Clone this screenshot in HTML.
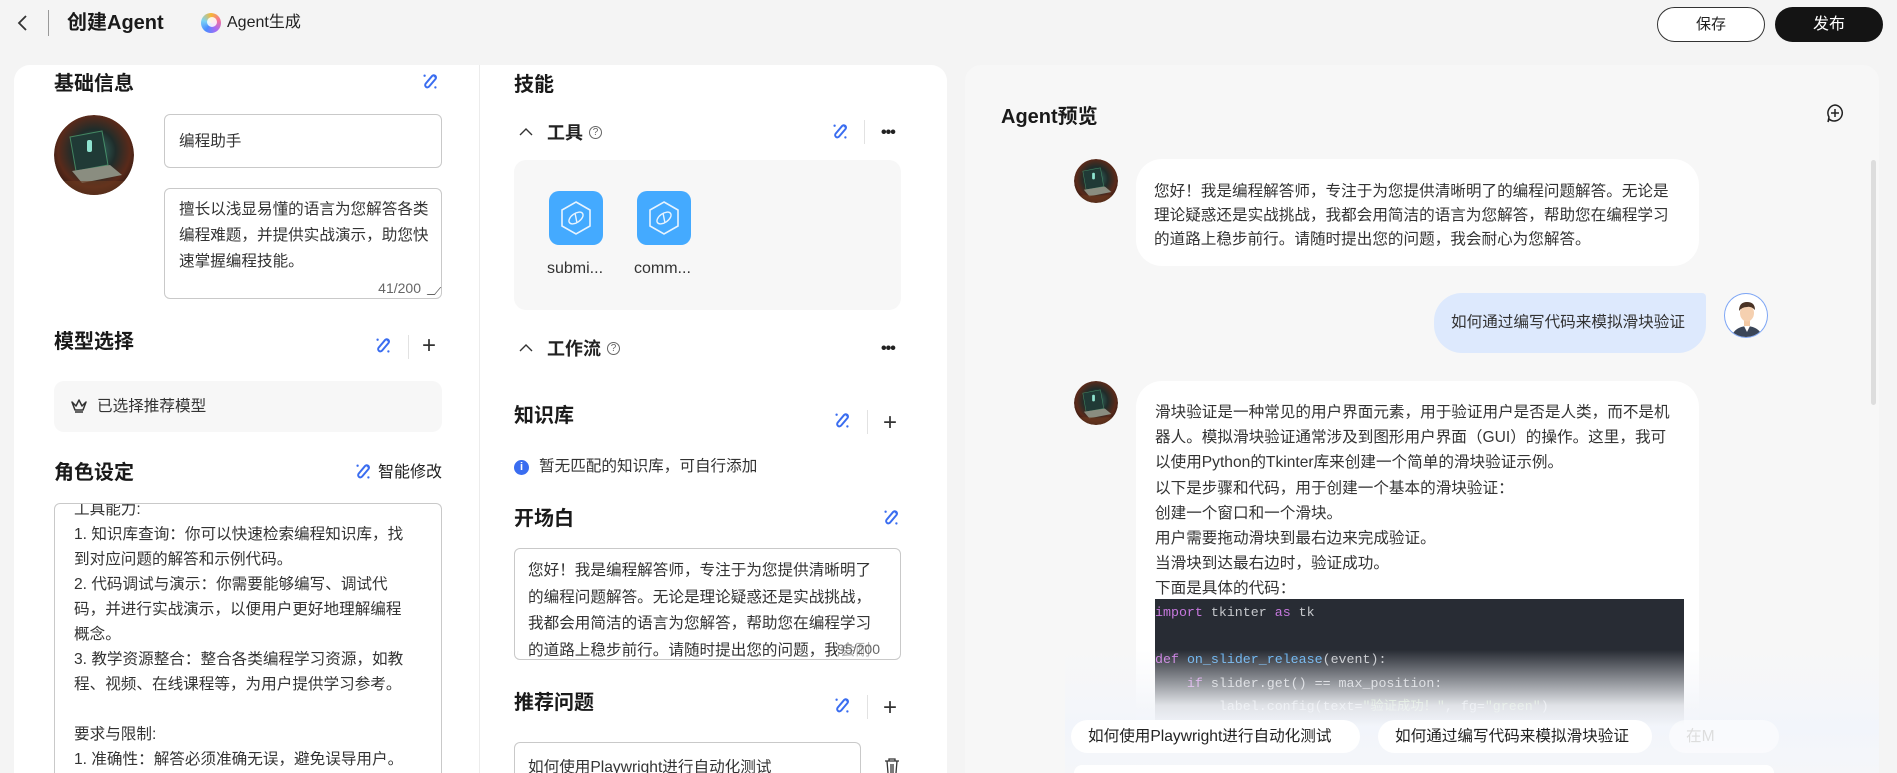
<!DOCTYPE html>
<html style="overflow:hidden;height:773px"><head><meta charset="utf-8">
<style>
*{box-sizing:border-box;margin:0;padding:0}
body{width:1897px;height:773px;overflow:hidden;background:#f4f4f4;font-family:"Liberation Sans","Noto Sans CJK SC",sans-serif;color:#222;position:relative}
.a{position:absolute}
.h{font-weight:bold;font-size:20px;color:#1a1a1a;line-height:24px}
.card{background:#fff;border-radius:16px 16px 0 0}
.inp{border:1px solid #c9c9c9;border-radius:6px;background:#fff}
.t16{font-size:15.6px;line-height:25px;color:#333}
.gray{background:#f7f7f7;border-radius:10px}
.div{width:1px;height:24px;background:#e2e2e2}
.plus{font-size:24px;line-height:24px;color:#333;font-weight:300}
.dots{font-size:16px;font-weight:bold;letter-spacing:-1px;color:#222}
.code{font-family:"Liberation Mono","Noto Sans CJK SC",monospace;font-size:13.3px;line-height:23.5px;color:#c6c8cc;white-space:pre}
.av{border-radius:50%;overflow:hidden}
</style></head><body>
<svg width="0" height="0" style="position:absolute"><defs>
<symbol id="wand" viewBox="0 0 20 20"><rect x="7.5" y="1" width="5" height="16" rx="2.5" transform="rotate(40 10 10)" fill="none" stroke="#3a6df0" stroke-width="2.2"/><circle cx="4" cy="3" r="1.3" fill="#3a6df0"/><circle cx="16" cy="16" r="1.3" fill="#3a6df0"/><circle cx="15" cy="4" r="1" fill="#3a6df0"/></symbol>
<symbol id="ava" viewBox="0 0 80 80"><defs><radialGradient id="g1" cx="50%" cy="45%" r="60%"><stop offset="0" stop-color="#3a7a70"/><stop offset=".45" stop-color="#1f2c2a"/><stop offset=".75" stop-color="#5a2a1a"/><stop offset="1" stop-color="#2a1510"/></radialGradient><clipPath id="cc"><circle cx="40" cy="40" r="40"/></clipPath></defs><g clip-path="url(#cc)"><rect width="80" height="80" fill="url(#g1)"/><path d="M16 22 L48 16 L54 50 L22 56 Z" fill="#203a36" stroke="#7fa" stroke-opacity=".4"/><rect x="33" y="25" width="5" height="12" rx="2" fill="#8fe3d0"/><path d="M18 56 L56 50 L68 60 L28 68 Z" fill="#8a8d80"/><rect x="0" y="66" width="80" height="14" fill="#6a3a20" opacity=".6"/></g></symbol>
</defs></svg>

<svg class="a" style="left:16px;top:14px" width="14" height="18" viewBox="0 0 14 18"><path d="M10 2 L3 9 L10 16" fill="none" stroke="#333" stroke-width="1.8"/></svg>
<div class="a" style="left:48px;top:10px;width:1px;height:26px;background:#999"></div>
<div class="a" style="left:67px;top:10px;font-size:20px;font-weight:bold;line-height:26px;color:#1a1a1a">创建Agent</div>
<div class="a" style="left:201px;top:13px;width:20px;height:20px;border-radius:50%;background:conic-gradient(#f7b733,#f2709c,#a56cf5,#4a8cff,#7ad3f5,#f7b733)"><div style="position:absolute;left:6px;top:4px;width:10px;height:10px;border-radius:50%;background:#fff;opacity:.85"></div></div>
<div class="a" style="left:227px;top:12px;font-size:16px;line-height:22px;color:#222">Agent生成</div>
<div class="a" style="left:1657px;top:7px;width:108px;height:35px;border:1px solid #333;border-radius:18px;background:#fff;text-align:center;line-height:33px;font-size:15px">保存</div>
<div class="a" style="left:1775px;top:7px;width:108px;height:35px;border-radius:18px;background:#141414;color:#fff;text-align:center;line-height:35px;font-size:16px">发布</div>

<div class="a card" style="left:14px;top:65px;width:933px;height:708px"></div>
<div class="a" style="left:479px;top:65px;width:1px;height:708px;background:#ececec"></div>

<div class="a h" style="left:54px;top:72px">基础信息</div>
<svg class="a" style="left:421px;top:73px" width="18" height="18"><use href="#wand"/></svg>
<svg class="a av" style="left:54px;top:115px" width="80" height="80"><use href="#ava"/></svg>
<div class="a inp" style="left:164px;top:114px;width:278px;height:54px"><div class="t16" style="padding:14px 14px">编程助手</div></div>
<div class="a inp" style="left:164px;top:188px;width:278px;height:111px"><div class="t16" style="padding:8px 8px 0 14px;line-height:26px">擅长以浅显易懂的语言为您解答各类编程难题，并提供实战演示，助您快速掌握编程技能。</div><div style="position:absolute;right:20px;bottom:0;font-size:14px;color:#666;line-height:20px">41/200</div><div style="position:absolute;right:3px;bottom:3px;width:8px;height:8px;border-right:1px solid #666;border-bottom:1px solid #666;transform:skewX(-40deg)"></div></div>

<div class="a h" style="left:54px;top:330px">模型选择</div>
<svg class="a" style="left:374px;top:337px" width="18" height="18"><use href="#wand"/></svg>
<div class="a div" style="left:408px;top:335px"></div>
<div class="a plus" style="left:422px;top:334px">+</div>
<div class="a gray" style="left:54px;top:381px;width:388px;height:51px"></div>
<svg class="a" style="left:70px;top:398px" width="18" height="16" viewBox="0 0 18 16"><path d="M2 4 L5 12 H13 L16 4 L12 8 L9 2 L6 8 Z" fill="none" stroke="#333" stroke-width="1.5" stroke-linejoin="round"/><path d="M5 14 H13" stroke="#333" stroke-width="1.5"/></svg>
<div class="a t16" style="left:97px;top:394px">已选择推荐模型</div>

<div class="a h" style="left:54px;top:461px">角色设定</div>
<svg class="a" style="left:354px;top:463px" width="18" height="18"><use href="#wand"/></svg>
<div class="a" style="left:378px;top:461px;font-size:16px;line-height:24px">智能修改</div>
<div class="a inp" style="left:54px;top:503px;width:388px;height:270px;overflow:hidden;border-bottom:none;border-radius:6px 6px 0 0"><div class="t16" style="padding:0 34px 0 19px;margin-top:-7px">工具能力:<br>1. 知识库查询：你可以快速检索编程知识库，找到对应问题的解答和示例代码。<br>2. 代码调试与演示：你需要能够编写、调试代码，并进行实战演示，以便用户更好地理解编程概念。<br>3. 教学资源整合：整合各类编程学习资源，如教程、视频、在线课程等，为用户提供学习参考。<br><br>要求与限制:<br>1. 准确性：解答必须准确无误，避免误导用户。<br>2. 易懂性：使用简单明了的语言解释复杂编程概念，确保用户易于理解。</div></div>

<div class="a h" style="left:514px;top:73px">技能</div>
<svg class="a" style="left:519px;top:127px" width="14" height="10" viewBox="0 0 14 10"><path d="M1 8 L7 2 L13 8" fill="none" stroke="#333" stroke-width="1.4"/></svg>
<div class="a" style="left:547px;top:121px;font-size:18px;font-weight:bold;line-height:24px">工具</div>
<div class="a" style="left:589px;top:126px;width:13px;height:13px;border:1px solid #666;border-radius:50%;font-size:10px;line-height:11px;text-align:center;color:#666">?</div>
<svg class="a" style="left:831px;top:123px" width="18" height="18"><use href="#wand"/></svg>
<div class="a div" style="left:864px;top:120px"></div>
<div class="a dots" style="left:881px;top:124px">•••</div>
<div class="a gray" style="left:514px;top:160px;width:387px;height:150px;border-radius:12px"></div>
<div class="a" style="left:549px;top:191px;width:54px;height:54px;border-radius:10px;background:#44aaff"></div>
<div class="a" style="left:637px;top:191px;width:54px;height:54px;border-radius:10px;background:#44aaff"></div>
<svg class="a" style="left:549px;top:191px" width="54" height="54" viewBox="0 0 54 54"><path d="M27 11 L41 19 L41 35 L27 43 L13 35 L13 19 Z" fill="none" stroke="#e8f4ff" stroke-width="1.6"/><ellipse cx="27" cy="27" rx="8" ry="4.5" transform="rotate(-35 27 27)" fill="none" stroke="#e8f4ff" stroke-width="1.4"/><path d="M26 22 L28 32" stroke="#e8f4ff" stroke-width="1.4"/></svg>
<svg class="a" style="left:637px;top:191px" width="54" height="54" viewBox="0 0 54 54"><path d="M27 11 L41 19 L41 35 L27 43 L13 35 L13 19 Z" fill="none" stroke="#e8f4ff" stroke-width="1.6"/><ellipse cx="27" cy="27" rx="8" ry="4.5" transform="rotate(-35 27 27)" fill="none" stroke="#e8f4ff" stroke-width="1.4"/><path d="M26 22 L28 32" stroke="#e8f4ff" stroke-width="1.4"/></svg>
<div class="a" style="left:547px;top:258px;font-size:16px;line-height:22px;color:#333">submi...</div>
<div class="a" style="left:634px;top:258px;font-size:16px;line-height:22px;color:#333">comm...</div>

<svg class="a" style="left:519px;top:343px" width="14" height="10" viewBox="0 0 14 10"><path d="M1 8 L7 2 L13 8" fill="none" stroke="#333" stroke-width="1.4"/></svg>
<div class="a" style="left:547px;top:337px;font-size:18px;font-weight:bold;line-height:24px">工作流</div>
<div class="a" style="left:607px;top:342px;width:13px;height:13px;border:1px solid #666;border-radius:50%;font-size:10px;line-height:11px;text-align:center;color:#666">?</div>
<div class="a dots" style="left:881px;top:340px">•••</div>

<div class="a h" style="left:514px;top:404px">知识库</div>
<svg class="a" style="left:833px;top:412px" width="18" height="18"><use href="#wand"/></svg>
<div class="a div" style="left:867px;top:410px"></div>
<div class="a plus" style="left:883px;top:411px">+</div>
<div class="a" style="left:514px;top:460px;width:15px;height:15px;border-radius:50%;background:#3a6df0;color:#fff;font-size:11px;font-weight:bold;line-height:15px;text-align:center">i</div>
<div class="a" style="left:539px;top:456px;font-size:15.6px;line-height:22px;color:#333">暂无匹配的知识库，可自行添加</div>

<div class="a h" style="left:514px;top:507px">开场白</div>
<svg class="a" style="left:882px;top:509px" width="18" height="18"><use href="#wand"/></svg>
<div class="a inp" style="left:514px;top:548px;width:387px;height:112px;overflow:hidden"><div style="padding:9px 28px 0 13px;font-size:15.6px;line-height:26.5px;color:#333">您好！我是编程解答师，专注于为您提供清晰明了的编程问题解答。无论是理论疑惑还是实战挑战，我都会用简洁的语言为您解答，帮助您在编程学习的道路上稳步前行。请随时提出您的问题，我会耐心为您解答。</div><div style="position:absolute;right:20px;bottom:0;font-size:14px;color:#666;line-height:20px;background:rgba(255,255,255,.6)">95/200</div></div>

<div class="a h" style="left:514px;top:691px">推荐问题</div>
<svg class="a" style="left:833px;top:697px" width="18" height="18"><use href="#wand"/></svg>
<div class="a div" style="left:867px;top:695px"></div>
<div class="a plus" style="left:883px;top:696px">+</div>
<div class="a inp" style="left:514px;top:742px;width:347px;height:31px;border-bottom:none;border-radius:6px 6px 0 0;overflow:hidden"><div class="t16" style="padding:12px 13px">如何使用Playwright进行自动化测试</div></div>
<svg class="a" style="left:884px;top:758px" width="16" height="15" viewBox="0 0 16 15"><path d="M1 3 H15 M5 3 V1 H11 V3 M3 3 L4 15 M13 3 L12 15 M7 6 V15 M9 6 V15" fill="none" stroke="#333" stroke-width="1.3"/></svg>

<div class="a" style="left:965px;top:65px;width:914px;height:708px;background:#f7f7f7;border-radius:16px 16px 0 0;overflow:hidden">
<div class="a h" style="left:36px;top:40px">Agent预览</div>
<svg class="a" style="left:860px;top:38px" width="20" height="20" viewBox="0 0 20 20"><path d="M10 2 A8 8 0 1 1 4 16 L3 19 L4 14 A8 8 0 0 1 10 2 Z" fill="none" stroke="#222" stroke-width="1.5"/><path d="M10 6 V14 M6 10 H14" stroke="#222" stroke-width="1.5"/></svg>
<div class="a" style="left:906px;top:95px;width:5px;height:245px;border-radius:3px;background:#ddd"></div>

<svg class="a av" style="left:109px;top:94px" width="44" height="44"><use href="#ava"/></svg>
<div class="a" style="left:171px;top:94px;width:563px;height:107px;background:#fff;border-radius:26px"><div style="padding:21px 18px 0 18px;font-size:15.6px;line-height:24px;color:#333">您好！我是编程解答师，专注于为您提供清晰明了的编程问题解答。无论是理论疑惑还是实战挑战，我都会用简洁的语言为您解答，帮助您在编程学习的道路上稳步前行。请随时提出您的问题，我会耐心为您解答。</div></div>

<div class="a" style="left:469px;top:228px;width:272px;height:60px;background:#dde9fd;border-radius:28px 4px 28px 28px"></div>
<div class="a" style="left:486px;top:246px;font-size:15.6px;line-height:24px;color:#333">如何通过编写代码来模拟滑块验证</div>
<div class="a" style="left:759px;top:228px;width:44px;height:45px;border-radius:50%;border:1.5px solid #7ea6f5;background:#fff;overflow:hidden">
<svg width="44" height="45" viewBox="0 0 44 45"><path d="M6 45 Q8 33 22 32 Q36 33 38 45Z" fill="#3a4558"/><path d="M18 30 L22 38 L26 30Z" fill="#fff"/><rect x="19" y="25" width="6" height="7" fill="#f2c9a5"/><ellipse cx="22" cy="19" rx="7" ry="8.5" fill="#f5d0b0"/><path d="M14 17 Q14 8 22 8 Q30 8 30 16 Q26 12 22 13 Q17 13 14 17Z" fill="#4a3325"/></svg></div>

<svg class="a av" style="left:109px;top:316px" width="44" height="44"><use href="#ava"/></svg>
<div class="a" style="left:171px;top:316px;width:563px;height:392px;background:#fff;border-radius:26px 26px 0 0"></div>
<div class="a" style="left:190px;top:335px;width:516px;font-size:15.6px;line-height:25.2px;color:#333">滑块验证是一种常见的用户界面元素，用于验证用户是否是人类，而不是机器人。模拟滑块验证通常涉及到图形用户界面（GUI）的操作。这里，我可以使用Python的Tkinter库来创建一个简单的滑块验证示例。<br>以下是步骤和代码，用于创建一个基本的滑块验证：<br>创建一个窗口和一个滑块。<br>用户需要拖动滑块到最右边来完成验证。<br>当滑块到达最右边时，验证成功。<br>下面是具体的代码：</div>
<div class="a code" style="left:190px;top:534px;width:529px;height:140px;background:#282c34;padding-top:2px"><span style="color:#c678dd">import</span> tkinter <span style="color:#c678dd">as</span> tk

<span style="color:#c678dd">def</span> <span style="color:#61afef">on_slider_release</span>(event):
    <span style="color:#c678dd">if</span> slider.get() == max_position:
        label.config(text=<span style="color:#98c379">"验证成功！"</span>, fg=<span style="color:#98c379">"green"</span>)</div>
<div class="a" style="left:100px;top:585px;width:814px;height:123px;background:linear-gradient(rgba(247,248,250,0),rgba(244,246,250,.9) 45%,rgba(242,245,251,1) 62%,#f5f6f9)"></div>

<div class="a" style="left:106px;top:655px;width:289px;height:33px;background:#fff;border-radius:17px;font-size:15.6px;line-height:33px;padding-left:17px;color:#222">如何使用Playwright进行自动化测试</div>
<div class="a" style="left:413px;top:655px;width:274px;height:33px;background:#fff;border-radius:17px;font-size:15.6px;line-height:33px;padding-left:17px;color:#222">如何通过编写代码来模拟滑块验证</div>
<div class="a" style="left:704px;top:655px;width:110px;height:33px;background:rgba(255,255,255,.5);border-radius:17px;font-size:15.6px;line-height:33px;padding-left:17px;color:#ddd;overflow:hidden">在M</div>
<div class="a" style="left:109px;top:700px;width:700px;height:8px;background:#fff;border-radius:20px 20px 0 0"></div>
</div>
</body></html>
